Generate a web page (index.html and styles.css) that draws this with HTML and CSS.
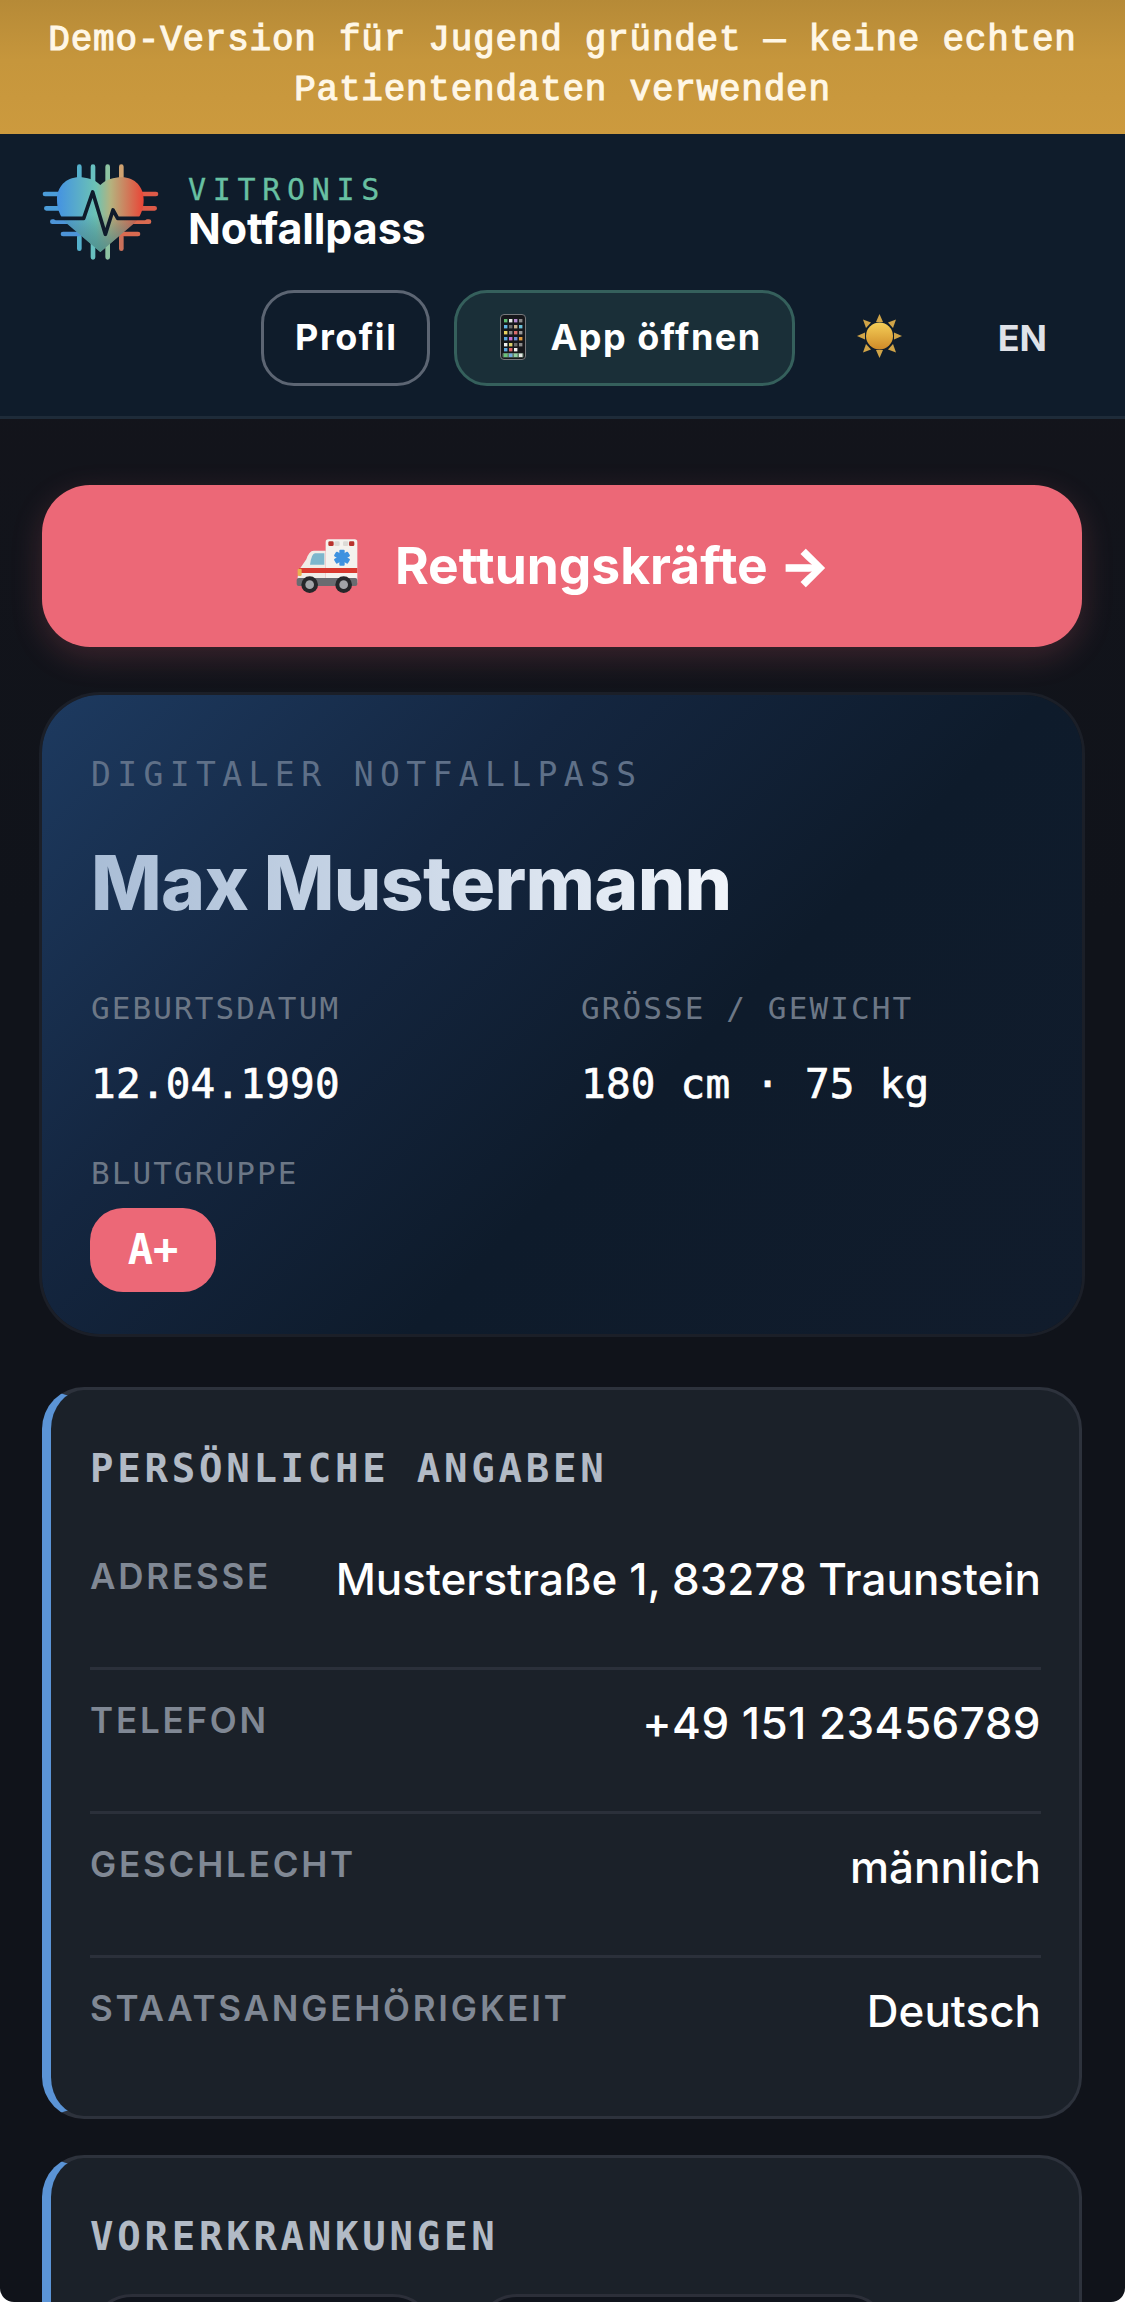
FILE: index.html
```html
<!DOCTYPE html>
<html lang="de">
<head>
<meta charset="utf-8">
<title>Vitronis Notfallpass</title>
<link rel="stylesheet" href="styles.css">
</head>
<body>
<div class="app">
  <div class="banner">Demo-Version für Jugend gründet — keine echten Patientendaten verwenden</div>
  <header class="header">
    <div class="brand">
      <svg class="logo" viewBox="65 66 360 300" aria-hidden="true">
        <defs>
          <linearGradient id="hg" x1="0" y1="0" x2="1" y2="0">
            <stop offset="0" stop-color="#4492e2"/>
            <stop offset=".45" stop-color="#6cc3b4"/>
            <stop offset=".62" stop-color="#b5b27e"/>
            <stop offset="1" stop-color="#ea4436"/>
          </linearGradient>
          <linearGradient id="hf" x1="0" y1="0" x2="0" y2="1">
            <stop offset=".5" stop-color="#3f6f80" stop-opacity="0"/>
            <stop offset="1" stop-color="#4f8f8c" stop-opacity=".9"/>
          </linearGradient>
        </defs>
        <g fill="none" stroke-width="14" stroke-linecap="round">
          <path stroke="#54b0cc" d="M177 80V130M177 290V326"/>
          <path stroke="#68c0c0" d="M218 80V130M218 290V352"/>
          <path stroke="#8dc3a2" d="M262 80V130M262 290V352"/>
          <path stroke="#cfa271" d="M303 80V130"/>
          <path stroke="#c9705a" d="M303 290V326"/>
          <path stroke="#4b9cd9" d="M74 162H125M78 205H120"/>
          <path stroke="#4d94d8" d="M96 245H150M128 282H180"/>
          <path stroke="#dd5a48" d="M355 162H407M360 205H403"/>
          <path stroke="#d96a50" d="M330 245H386M300 282H353"/>
        </g>
        <path fill="url(#hg)" d="M240 135C222 118 200 112 176 112C135 112 110 142 110 180C110 205 118 226 134 246L240 336L346 246C362 226 370 205 370 180C370 142 345 112 304 112C280 112 258 118 240 135Z"/>
        <path fill="url(#hf)" d="M240 135C222 118 200 112 176 112C135 112 110 142 110 180C110 205 118 226 134 246L240 336L346 246C362 226 370 205 370 180C370 142 345 112 304 112C280 112 258 118 240 135Z"/>
        <path fill="none" stroke="#0f1b2b" stroke-width="11" stroke-linecap="round" stroke-linejoin="round" d="M106 235H190L217 156L255 283L278 210L292 235H374"/>
      </svg>
      <div class="wordmark">
        <div class="wordmark-top">VITRONIS</div>
        <div class="wordmark-name">Notfallpass</div>
      </div>
    </div>
    <nav class="nav">
      <a class="btn btn-ghost">Profil</a>
      <a class="btn btn-app">
        <svg class="phone" viewBox="0 0 26 46" aria-hidden="true">
          <rect x=".5" y=".5" width="25" height="45" rx="3.5" fill="#16171b" stroke="#77797d"/>
          <g>
            <rect x="4" y="5" width="3.4" height="3.4" fill="#5fbf73"/><rect x="9" y="5" width="3.4" height="3.4" fill="#e8e8e8"/><rect x="14" y="5" width="3.4" height="3.4" fill="#b58bd0"/><rect x="19" y="5" width="3.4" height="3.4" fill="#8b8b8b"/>
            <rect x="4" y="11" width="3.4" height="3.4" fill="#63b5e5"/><rect x="9" y="11" width="3.4" height="3.4" fill="#6a6a6a"/><rect x="14" y="11" width="3.4" height="3.4" fill="#c7b08c"/><rect x="19" y="11" width="3.4" height="3.4" fill="#6cc0d8"/>
            <rect x="4" y="17" width="3.4" height="3.4" fill="#e8d25f"/><rect x="9" y="17" width="3.4" height="3.4" fill="#8a8a8a"/><rect x="14" y="17" width="3.4" height="3.4" fill="#d96c6c"/><rect x="19" y="17" width="3.4" height="3.4" fill="#9a9a9a"/>
            <rect x="4" y="23" width="3.4" height="3.4" fill="#5aa7e0"/><rect x="9" y="23" width="3.4" height="3.4" fill="#c86fd0"/><rect x="14" y="23" width="3.4" height="3.4" fill="#6a8fd8"/><rect x="19" y="23" width="3.4" height="3.4" fill="#e09a40"/>
            <rect x="4" y="29" width="3.4" height="3.4" fill="#efefef"/><rect x="9" y="29" width="3.4" height="3.4" fill="#d9cf6a"/><rect x="14" y="29" width="3.4" height="3.4" fill="#6a6a6a"/><rect x="19" y="29" width="3.4" height="3.4" fill="#8a8a8a"/>
            <rect x="4" y="34" width="3.4" height="3.4" fill="#5aa7e0"/><rect x="9" y="34" width="3.4" height="3.4" fill="#d96060"/><rect x="14" y="34" width="3.4" height="3.4" fill="#f2f2f2"/>
          </g>
          <rect x="2.500" y="39" width="21" height="4.600" rx="1" fill="#5f7a68"/>
          <rect x="4" y="39.600" width="3.400" height="3.400" fill="#66c478"/><rect x="9" y="39.600" width="3.400" height="3.400" fill="#6fa8e0"/><rect x="14" y="39.600" width="3.400" height="3.400" fill="#8fd0a0"/><rect x="19" y="39.600" width="3.400" height="3.400" fill="#e8e8e8"/>
        </svg>
        <span>App öffnen</span>
      </a>
      <a class="btn-sun">
        <svg class="sun" viewBox="0 0 45 44" aria-hidden="true">
          <defs>
            <linearGradient id="sg" x1="0" y1="0" x2="0" y2="1">
              <stop offset="0" stop-color="#f5cf58"/>
              <stop offset="1" stop-color="#cf8a28"/>
            </linearGradient>
          </defs>
          <g fill="#d0a448">
            <path d="M22.500 0L26 8H19Z"/><path d="M22.500 44L19 36H26Z"/>
            <path d="M0 22L8 18.500V25.500Z"/><path d="M45 22L37 25.500V18.500Z"/>
            <path d="M6 5.500L14 8.500L9 14Z"/><path d="M39 5.500L36 14L31 8.500Z"/>
            <path d="M6 38.500L9 30L14 35.500Z"/><path d="M39 38.500L31 35.500L36 30Z"/>
          </g>
          <circle cx="22.500" cy="22" r="13.500" fill="url(#sg)"/>
        </svg>
      </a>
      <a class="btn-lang">EN</a>
    </nav>
  </header>
  <main class="main">
    <a class="rescue">
      <svg class="ambulance" viewBox="80 60 195 168" aria-hidden="true">
        <rect x="172" y="64" width="95" height="136" rx="8" fill="#f4f2ee"/>
        <path d="M172 98H136Q122 98 114 124L96 150Q88 162 88 178V198H172Z" fill="#efece7"/>
        <path d="M168 106H140Q130 106 125 140H168Z" fill="#7db6cd"/>
        <rect x="180" y="70" width="16" height="14" rx="4" fill="#b8332e"/>
        <rect x="198" y="70" width="16" height="14" rx="4" fill="#dcdad6"/>
        <rect x="224" y="70" width="16" height="14" rx="4" fill="#dcdad6"/>
        <rect x="242" y="70" width="16" height="14" rx="4" fill="#b8332e"/>
        <g fill="#3f92e0">
          <rect x="213" y="95" width="16" height="48" rx="3"/>
          <rect x="213" y="95" width="16" height="48" rx="3" transform="rotate(60 221 119)"/>
          <rect x="213" y="95" width="16" height="48" rx="3" transform="rotate(120 221 119)"/>
        </g>
        <path d="M92 150H267V165H89Z" fill="#d93a30"/>
        <rect x="88" y="152" width="12" height="22" rx="4" fill="#e9b24e"/>
        <path d="M85 186Q85 180 91 180H261Q267 180 267 186V198Q267 204 261 204H91Q85 204 85 198Z" fill="#6a6b70"/>
        <circle cx="124" cy="200" r="25" fill="#26272a"/>
        <circle cx="124" cy="200" r="13" fill="#a2a4a8"/>
        <circle cx="226" cy="200" r="25" fill="#26272a"/>
        <circle cx="226" cy="200" r="13" fill="#a2a4a8"/>
      </svg>
      <span class="rescue-text">Rettungskräfte <span class="arrow">→</span></span>
    </a>
    <section class="hero">
      <div class="hero-kicker">DIGITALER NOTFALLPASS</div>
      <h1 class="hero-name"><span>Max Mustermann</span></h1>
      <div class="hero-grid">
        <div>
          <div class="hero-label">GEBURTSDATUM</div>
          <div class="hero-value">12.04.1990</div>
        </div>
        <div>
          <div class="hero-label">GRÖSSE / GEWICHT</div>
          <div class="hero-value">180 cm · 75 kg</div>
        </div>
      </div>
      <div class="hero-label hero-blood-label">BLUTGRUPPE</div>
      <div class="blood">A+</div>
    </section>
    <section class="card">
      <h2 class="card-title">PERSÖNLICHE ANGABEN</h2>
      <div class="row"><div class="row-label">ADRESSE</div><div class="row-value">Musterstraße 1, 83278 Traunstein</div></div>
      <div class="row"><div class="row-label">TELEFON</div><div class="row-value row-phone">+49 151 23456789</div></div>
      <div class="row"><div class="row-label">GESCHLECHT</div><div class="row-value">männlich</div></div>
      <div class="row"><div class="row-label">STAATSANGEHÖRIGKEIT</div><div class="row-value">Deutsch</div></div>
    </section>
    <section class="card">
      <h2 class="card-title">VORERKRANKUNGEN</h2>
      <div class="chips">
        <div class="chip chip-a"></div>
        <div class="chip chip-b"></div>
      </div>
    </section>
  </main>
</div>
</body>
</html>
```
FILE: styles.css
```css
* { box-sizing: border-box; }
html, body { margin: 0; padding: 0; height: 2302px; overflow: hidden; background: #fff; }
body { font-family: Inter, "Liberation Sans", sans-serif; }
.app {
  height: 2302px;
  overflow: hidden;
  background: linear-gradient(180deg, #15151c 0, #10131a 40%, #10131a 100%);
  border-radius: 0 0 14px 14px;
}
.banner {
  height: 134px;
  padding: 16px 40px;
  background: linear-gradient(180deg, #b68a37 0, #c6963c 45%, #cc9a3e 100%);
  color: #fff7e6;
  font: 400 36px/50px "Liberation Mono", monospace;
  -webkit-text-stroke: 1.1px #fff7e6;
  letter-spacing: 0.75px;
  text-align: center;
}
.header {
  height: 285px;
  padding: 28px 42px 30px;
  background: #0f1c2b;
  border-bottom: 3px solid #1e2b39;
}
.brand { display: flex; align-items: center; gap: 26px; height: 100px; }
.logo { width: 120px; height: 100px; flex: none; }
.wordmark { display: flex; flex-direction: column; margin-bottom: 3px; }
.wordmark-top {
  font: 400 30px/34px "DejaVu Sans Mono", monospace;
  -webkit-text-stroke: 0.3px #68c0a2;
  letter-spacing: 6.7px;
  color: #68c0a2;
}
.wordmark-name { font: 700 43px/42px Inter, sans-serif; letter-spacing: -0.1px; color: #fff; }
.nav { display: flex; justify-content: flex-end; align-items: center; gap: 24px; margin-top: 28px; }
.btn {
  display: flex;
  align-items: center;
  height: 96px;
  border-radius: 33px;
  color: #fff;
  font: 700 36px/44px Inter, sans-serif;
  letter-spacing: 1.5px;
}
.btn-ghost { padding: 0 30px 2px 31px; border: 3px solid #5c6573; }
.btn-app { padding: 0 30px 2px 43px; gap: 24px; background: #1a2f38; border: 3px solid #35605c; }
.phone { width: 26px; height: 46px; flex: none; }
.btn-sun { display: flex; width: 125px; height: 96px; padding: 0 3px 4px 0; align-items: center; justify-content: center; }
.sun { width: 45px; height: 44px; }
.btn-lang { padding: 0 36px 0 30px; font: 700 36px/44px Inter, sans-serif; color: #dfe2e8; }
.main { padding: 66px 43px 0 42px; }
.rescue {
  display: flex;
  align-items: center;
  justify-content: center;
  gap: 35px;
  height: 162px;
  border-radius: 48px;
  background: #ec6877;
  color: #fff;
  font: 700 51.5px/60px Inter, sans-serif;
  box-shadow: 0 10px 32px rgba(236, 104, 119, 0.2);
}
.rescue-text { margin-bottom: 3px; }
.arrow { -webkit-text-stroke: 1.5px #fff; }
.ambulance { width: 65px; height: 56px; flex: none; }
.hero {
  height: 639px;
  margin-top: 48px;
  padding: 60px 49px 0;
  border-radius: 58px;
  background: linear-gradient(135deg, #1d3a60 0, #142640 32%, #0e1b2b 60%, #111c2c 100%);
  box-shadow: 0 0 0 3px #1b1f28;
}
.hero-kicker {
  font: 400 33px/40px "DejaVu Sans Mono", monospace;
  letter-spacing: 6.4px;
  color: #5f7088;
}
.hero-name { margin: 43px 0 0; font: 800 75px/90px Inter, sans-serif; letter-spacing: -0.75px; }
.hero-name span {
  background: linear-gradient(90deg, #a9bdd6 0, #f0f4fa 100%);
  -webkit-background-clip: text;
  background-clip: text;
  color: transparent;
}
.hero-grid { display: grid; grid-template-columns: 490px 1fr; margin-top: 61px; }
.hero-label {
  font: 400 31px/38px "DejaVu Sans Mono", monospace;
  letter-spacing: 2.1px;
  color: #6c7786;
}
.hero-value {
  margin-top: 32px;
  font: 400 41px/50px "DejaVu Sans Mono", monospace;
  -webkit-text-stroke: 0.7px #fff;
  letter-spacing: 0.2px;
  color: #fff;
}
.hero-blood-label { margin-top: 45px; }
.blood {
  display: flex;
  align-items: center;
  justify-content: center;
  width: 126px;
  height: 84px;
  margin: 16px 0 0 -1px;
  border-radius: 33px;
  background: #ec6877;
  color: #fff;
  font: 700 42px/48px "DejaVu Sans Mono", monospace;
}
.card {
  margin-top: 36px;
  padding: 0 38px 17px 39px;
  border: 3px solid #2d323c;
  border-left: 9px solid #5b94d6;
  border-radius: 42px;
  background: #1b2129;
}
.hero + .card { margin-top: 53px; }
.card-title {
  margin: 0;
  padding-top: 55px;
  height: 136px;
  font: 700 39px/48px "DejaVu Sans Mono", monospace;
  letter-spacing: 3.75px;
  color: #b2bac5;
}
.row {
  display: flex;
  justify-content: space-between;
  align-items: flex-start;
  height: 144px;
  padding-top: 23px;
  border-bottom: 3px solid #2b303a;
}
.row:last-child { border-bottom: 0; height: 141px; }
.row-label {
  padding-top: 3px;
  font: 600 35px/48px Inter, sans-serif;
  letter-spacing: 2.8px;
  color: #808894;
}
.row-value { font: 500 44px/60px Inter, sans-serif; color: #fff; }
.row-phone { letter-spacing: 0.45px; }
.chips { display: flex; gap: 40px; }
.chip { height: 90px; border: 3px solid #2c2f39; border-radius: 42px; background: #10141c; }
.chip-a { width: 345px; }
.chip-b { width: 415px; }
```
